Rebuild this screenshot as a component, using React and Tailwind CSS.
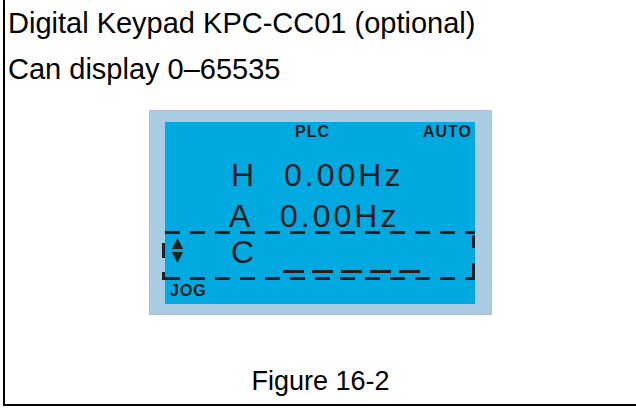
import React from 'react'

const ink = 'text-[#231f20]'

function Arrows() {
  return (
    <svg width="11" height="25" viewBox="0 0 11 25" className="shrink-0">
      <polygon points="5.5,0 11,11 0,11" fill="#231f20" />
      <polygon points="0,14 11,14 5.5,25" fill="#231f20" />
    </svg>
  )
}

function DashedFrame() {
  // dashed selection box around the C row, drawn over the screen
  return (
    <svg
      width="315"
      height="49"
      viewBox="0 0 315 49"
      className="absolute left-[-3px] top-[109px] pointer-events-none"
    >
      <g stroke="#231f20" strokeWidth="3" fill="none">
        <line x1="3" y1="1.5" x2="313" y2="1.5" strokeDasharray="15 10" />
        <line x1="3" y1="47.5" x2="313" y2="47.5" strokeDasharray="15 10" />
        <line x1="1.5" y1="12" x2="1.5" y2="27" />
        <line x1="1.5" y1="41" x2="1.5" y2="49" />
        <line x1="311.5" y1="4" x2="311.5" y2="17" />
        <line x1="311.5" y1="32" x2="311.5" y2="46" />
      </g>
    </svg>
  )
}

function Lcd() {
  return (
    <div className="w-[343px] h-[205px] bg-[#a8cce1] border border-[#b9bad9] pt-[11px] pl-[15px]">
      <div className={`relative w-[310px] h-[182px] bg-[#00a9e0] ${ink}`}>
        <div className="flex pt-[2px] pr-[3px] text-[16px] leading-none font-bold tracking-[1px]">
          <span className="ml-[130px]">PLC</span>
          <span className="ml-auto">AUTO</span>
        </div>
        <div className="flex mt-[19px] pl-[66px] text-[32px] leading-none">
          <span className="w-[53px]">H</span>
          <span className="tracking-[3px]">0.00Hz</span>
        </div>
        <div className="flex mt-[9px] pl-[64px] text-[32px] leading-none">
          <span className="w-[51px]">A</span>
          <span className="tracking-[3px]">0.00Hz</span>
        </div>
        <div className="flex items-start mt-[4px] pl-[7px] h-[36px] text-[32px] leading-none">
          <div className="pt-[2px]">
            <Arrows />
          </div>
          <span className="ml-[48px] w-[52px]">C</span>
          <div className="self-end flex gap-[8px] mb-[-1px]">
            <div className="w-[21px] h-[3px] bg-[#231f20]" />
            <div className="w-[21px] h-[3px] bg-[#231f20]" />
            <div className="w-[21px] h-[3px] bg-[#231f20]" />
            <div className="w-[21px] h-[3px] bg-[#231f20]" />
            <div className="w-[21px] h-[3px] bg-[#231f20]" />
          </div>
        </div>
        <div className="mt-[11px] pl-[5px] text-[16px] leading-none font-bold tracking-[1px]">JOG</div>
        <DashedFrame />
      </div>
    </div>
  )
}

export default function App() {
  return (
    <div className="w-[636px] h-[410px] bg-white font-['Liberation_Sans',Arial,sans-serif]">
      <div className="ml-[3px] h-[406px] border-l-2 border-b-2 border-black flex flex-col text-black">
        <div className="pl-[3px] text-[29px] leading-[46px]">
          <div>Digital Keypad KPC-CC01 (optional)</div>
          <div>Can display 0–65535</div>
        </div>
        <div className="mt-[18px] flex justify-center">
          <Lcd />
        </div>
        <div className="mt-[53px] text-center text-[27px] leading-none">Figure 16-2</div>
      </div>
    </div>
  )
}
